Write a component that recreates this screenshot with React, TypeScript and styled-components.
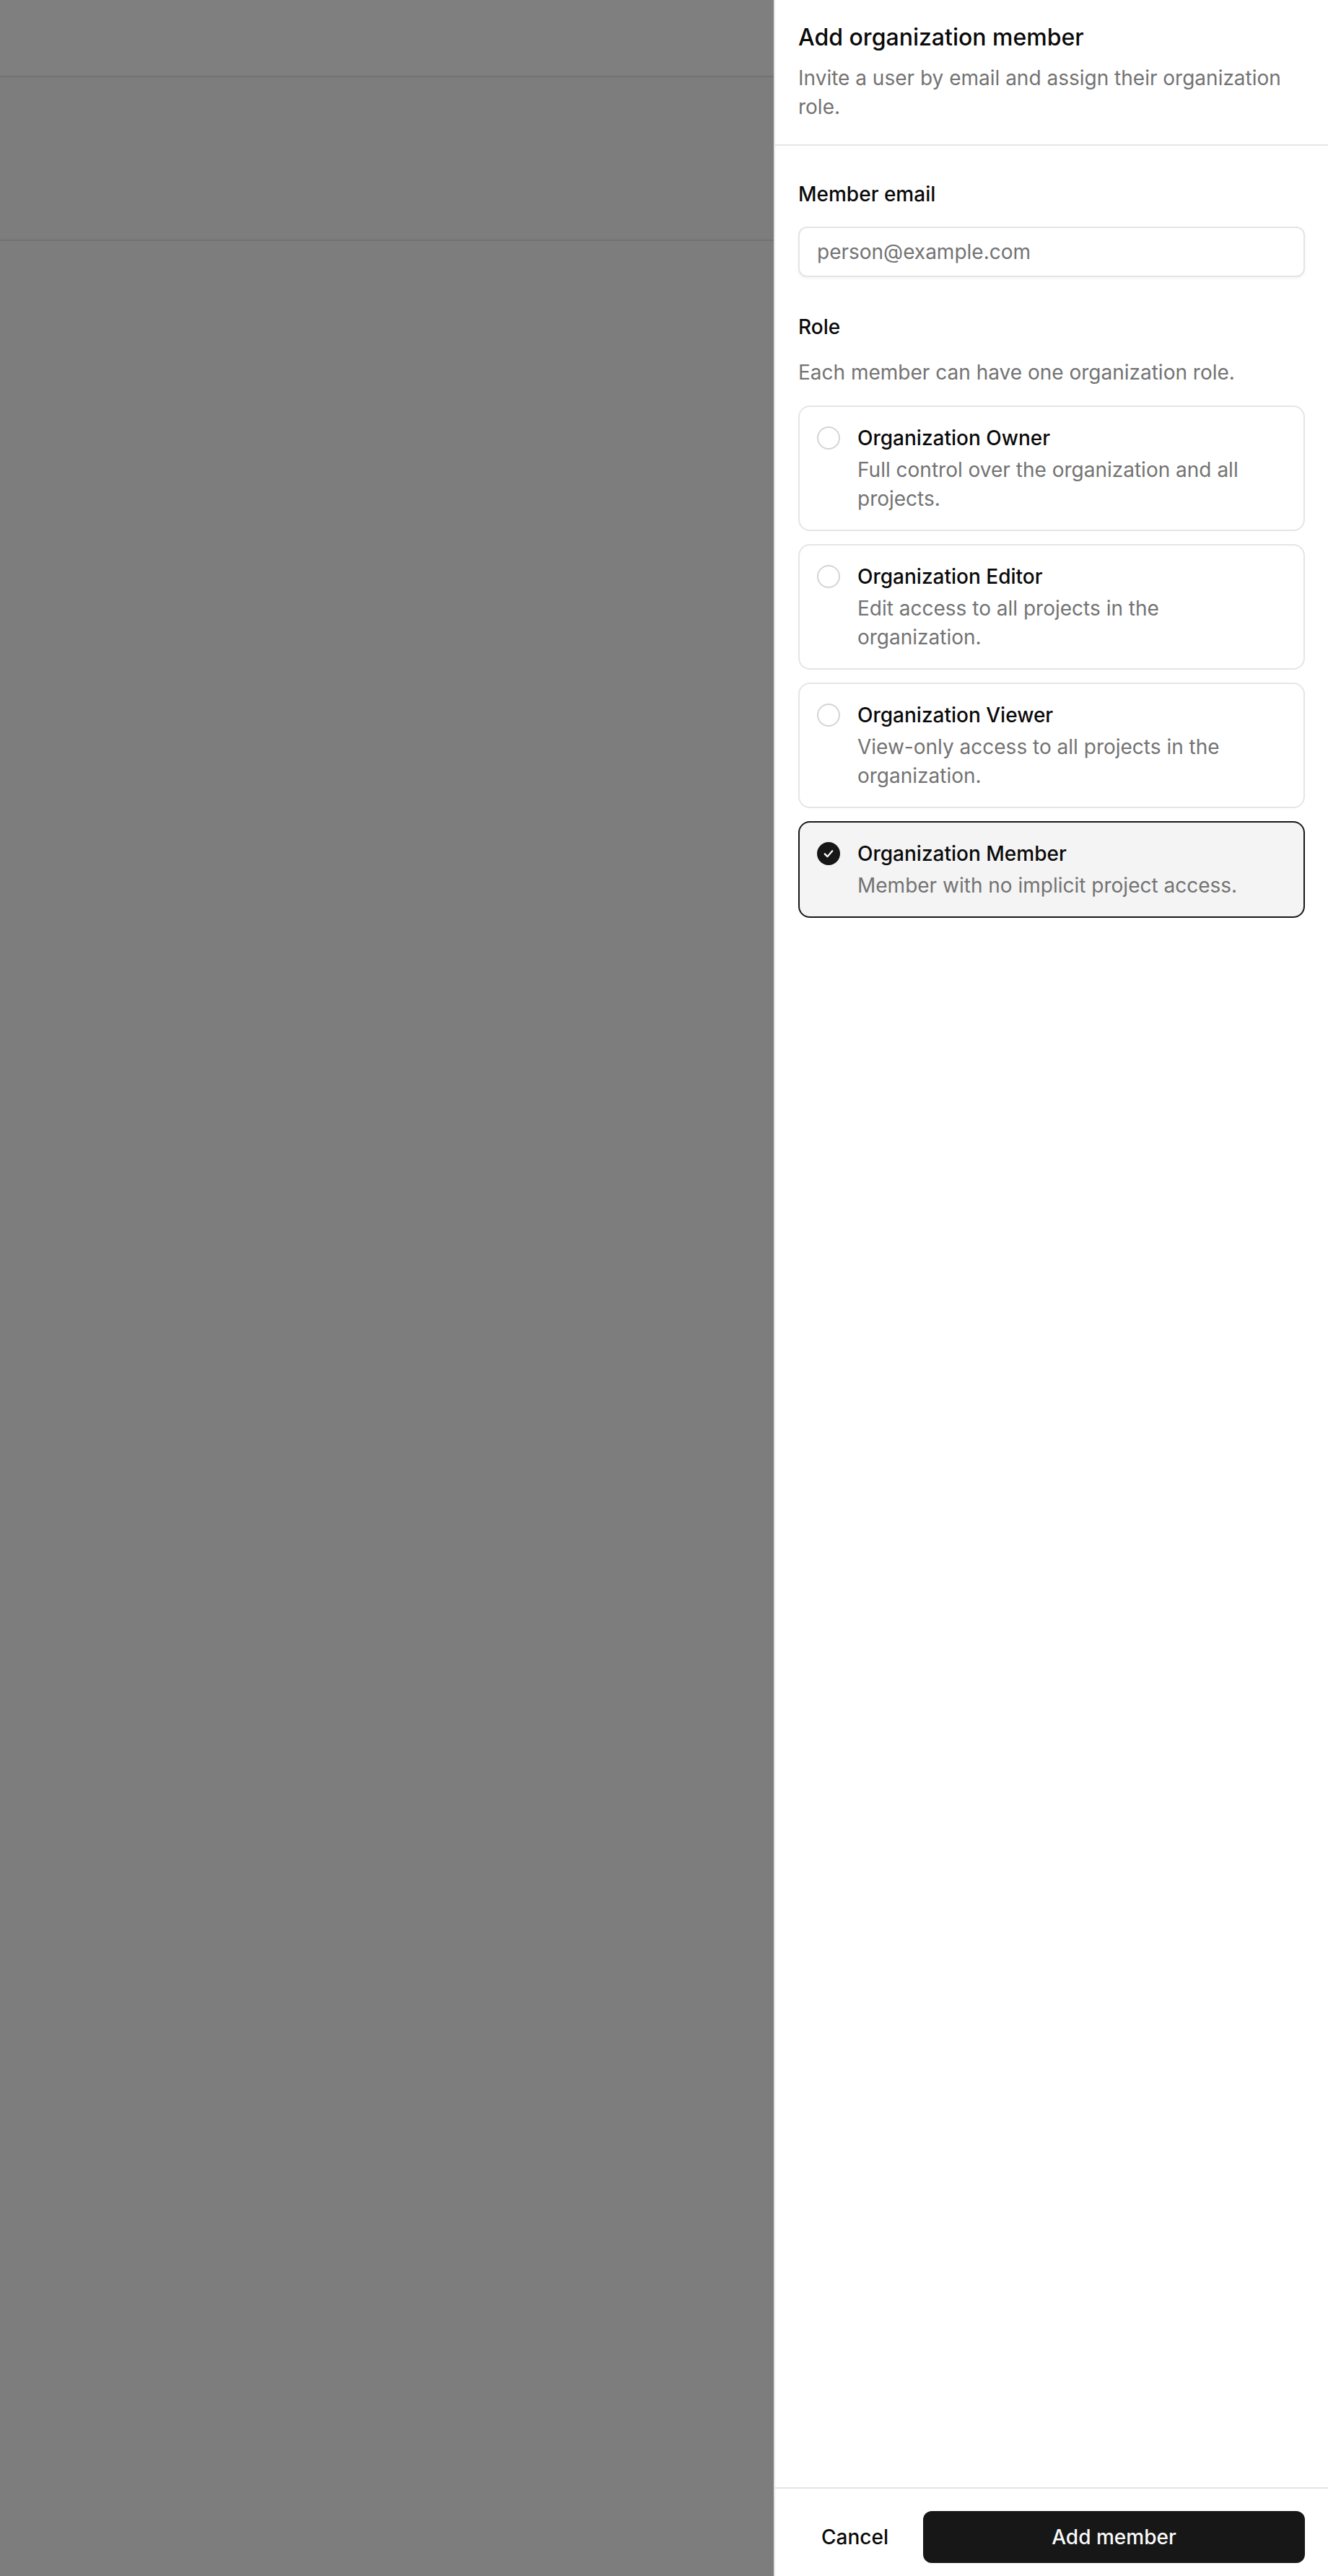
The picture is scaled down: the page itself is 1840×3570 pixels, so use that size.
import React, { useState } from 'react';
import styled, { createGlobalStyle } from 'styled-components';

const GlobalStyle = createGlobalStyle`
  * {
    box-sizing: border-box;
  }

  html,
  body {
    margin: 0;
    padding: 0;
    background: #fafafa;
    font-family: Inter, "Noto Sans", "Liberation Sans", sans-serif;
    color: #0a0a0a;
    -webkit-font-smoothing: antialiased;
  }
`;

const Page = styled.div`
  min-height: 100vh;
  display: flex;
  flex-direction: column;
  background: #fafafa;
`;

const PageHeader = styled.header`
  height: 107px;
  background: #ffffff;
  border-bottom: 2px solid #e5e5e5;
`;

const PageToolbar = styled.section`
  height: 227px;
  border-bottom: 2px solid #e5e5e5;
`;

const Overlay = styled.div`
  position: fixed;
  inset: 0;
  background: rgba(0, 0, 0, 0.5);
`;

const Sheet = styled.aside`
  position: fixed;
  top: 0;
  right: 0;
  width: 768px;
  height: 100vh;
  background: #ffffff;
  border-left: 2px solid #e5e5e5;
  display: flex;
  flex-direction: column;
`;

const SheetHeader = styled.div`
  display: flex;
  flex-direction: column;
  gap: 12px;
  padding: 28px 32px 32px 32px;
  border-bottom: 2px solid #e5e5e5;
`;

const SheetTitle = styled.h2`
  margin: 0;
  font-size: 32px;
  line-height: 48px;
  font-weight: 500;
  color: #0a0a0a;
`;

const SheetDescription = styled.p`
  margin: 0;
  font-size: 28px;
  line-height: 40px;
  color: #737373;
`;

const SheetBody = styled.div`
  flex: 1;
  display: flex;
  flex-direction: column;
  padding: 47px 32px 0 32px;
`;

const FieldLabel = styled.label<{ $gap: number }>`
  display: block;
  font-size: 28px;
  line-height: 40px;
  font-weight: 450;
  color: #0a0a0a;
  margin-bottom: ${props => props.$gap}px;
`;

const TextInput = styled.input`
  display: block;
  width: 100%;
  height: 70px;
  padding: 0 24px;
  border: 2px solid #e5e5e5;
  border-radius: 12px;
  background: #ffffff;
  box-shadow: 0 2px 4px rgba(0, 0, 0, 0.05);
  font-family: inherit;
  font-size: 28px;
  color: #0a0a0a;
  outline: none;
  margin-bottom: 49px;

  &::placeholder {
    color: #737373;
  }
`;

const FieldHint = styled.p`
  margin: 0 0 26px;
  font-size: 28px;
  line-height: 40px;
  color: #737373;
`;

const RoleList = styled.div`
  display: flex;
  flex-direction: column;
  gap: 18px;
`;

const RoleCard = styled.label<{ $selected: boolean }>`
  display: flex;
  align-items: flex-start;
  gap: 24px;
  padding: 23px 60px 23px 24px;
  border: 2px solid ${props => (props.$selected ? '#171717' : '#e5e5e5')};
  border-radius: 16px;
  background: ${props => (props.$selected ? '#f4f4f4' : '#ffffff')};
  cursor: pointer;
`;

const RadioDot = styled.span<{ $selected: boolean }>`
  flex: none;
  width: 32px;
  height: 32px;
  margin-top: 4px;
  border-radius: 50%;
  border: 2px solid ${props => (props.$selected ? '#171717' : '#d4d4d4')};
  background: ${props => (props.$selected ? '#171717' : '#ffffff')};
  display: flex;
  align-items: center;
  justify-content: center;

  svg {
    width: 18px;
    height: 18px;
  }
`;

const RoleText = styled.div`
  display: flex;
  flex-direction: column;
  gap: 4px;
`;

const RoleName = styled.span`
  font-size: 28px;
  line-height: 40px;
  font-weight: 450;
  color: #0a0a0a;
`;

const RoleDescription = styled.span`
  font-size: 28px;
  line-height: 40px;
  color: #737373;
`;

const SheetFooter = styled.div`
  display: flex;
  gap: 16px;
  padding: 31px 32px 18px 32px;
  border-top: 2px solid #e5e5e5;
`;

const Button = styled.button<{ $primary?: boolean }>`
  height: 72px;
  padding: 0 32px;
  border: none;
  border-radius: 12px;
  font-family: inherit;
  font-size: 28px;
  font-weight: 450;
  cursor: pointer;
  flex: ${props => (props.$primary ? 1 : 'none')};
  background: ${props => (props.$primary ? '#171717' : 'transparent')};
  color: ${props => (props.$primary ? '#fafafa' : '#0a0a0a')};
`;

const roles = [
  {
    id: 'owner',
    name: 'Organization Owner',
    description: 'Full control over the organization and all projects.',
  },
  {
    id: 'editor',
    name: 'Organization Editor',
    description: 'Edit access to all projects in the organization.',
  },
  {
    id: 'viewer',
    name: 'Organization Viewer',
    description: 'View-only access to all projects in the organization.',
  },
  {
    id: 'member',
    name: 'Organization Member',
    description: 'Member with no implicit project access.',
  },
];

const CheckMark: React.FC = () => (
  <svg viewBox="0 0 24 24" fill="none" stroke="#ffffff" strokeWidth={3} strokeLinecap="round" strokeLinejoin="round">
    <polyline points="5 12.5 10 17.5 19 7" />
  </svg>
);

export default function App() {
  const [role, setRole] = useState('member');

  return (
    <>
      <GlobalStyle />
      <Page>
        <PageHeader />
        <PageToolbar />
      </Page>
      <Overlay />
      <Sheet>
        <SheetHeader>
          <SheetTitle>Add organization member</SheetTitle>
          <SheetDescription>
            Invite a user by email and assign their organization role.
          </SheetDescription>
        </SheetHeader>
        <SheetBody>
          <FieldLabel $gap={25} htmlFor="member-email">
            Member email
          </FieldLabel>
          <TextInput id="member-email" type="email" placeholder="person@example.com" />
          <FieldLabel $gap={23}>Role</FieldLabel>
          <FieldHint>Each member can have one organization role.</FieldHint>
          <RoleList>
            {roles.map(r => {
              const selected = r.id === role;
              return (
                <RoleCard key={r.id} $selected={selected} onClick={() => setRole(r.id)}>
                  <RadioDot $selected={selected}>{selected && <CheckMark />}</RadioDot>
                  <RoleText>
                    <RoleName>{r.name}</RoleName>
                    <RoleDescription>{r.description}</RoleDescription>
                  </RoleText>
                </RoleCard>
              );
            })}
          </RoleList>
        </SheetBody>
        <SheetFooter>
          <Button>Cancel</Button>
          <Button $primary>Add member</Button>
        </SheetFooter>
      </Sheet>
    </>
  );
}
